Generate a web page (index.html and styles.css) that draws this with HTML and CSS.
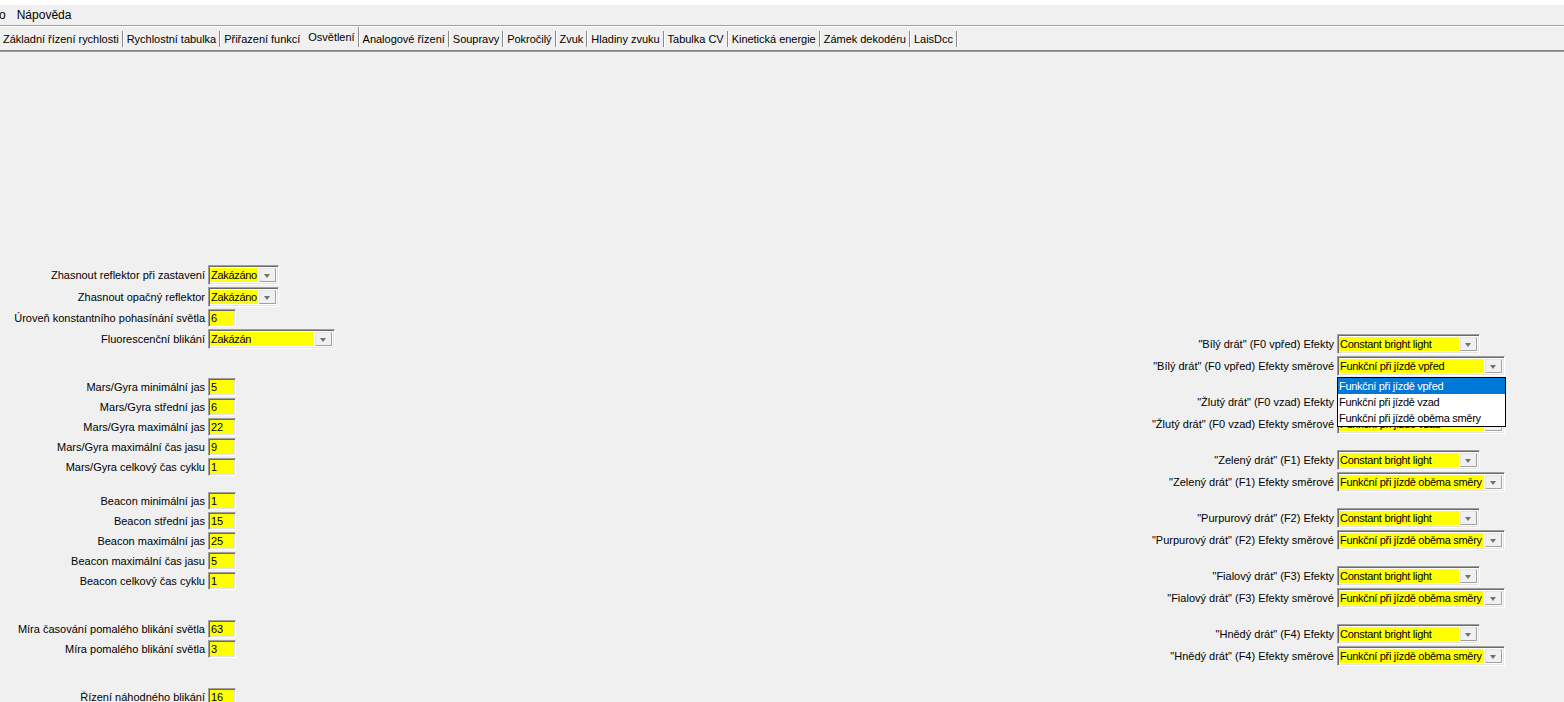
FILE: index.html
```html
<!DOCTYPE html>
<html lang="cs">
<head>
<meta charset="utf-8">
<title>Osvětlení</title>
<link rel="stylesheet" href="styles.css">
</head>
<body>
<div class="topstrip"></div>
<div class="menubar">
  <span class="menu-item cut">o</span>
  <span class="menu-item">Nápověda</span>
</div>
<div class="tabs">
  <span class="tab">Základní řízení rychlosti</span>
  <span class="tab">Rychlostní tabulka</span>
  <span class="tab noline">Přiřazení funkcí</span>
  <span class="tab active">Osvětlení</span>
  <span class="tab">Analogové řízení</span>
  <span class="tab">Soupravy</span>
  <span class="tab">Pokročilý</span>
  <span class="tab">Zvuk</span>
  <span class="tab">Hladiny zvuku</span>
  <span class="tab">Tabulka CV</span>
  <span class="tab">Kinetická energie</span>
  <span class="tab">Zámek dekodéru</span>
  <span class="tab">LaisDcc</span>
</div>
<div class="content">
  <div class="left">
    <div class="row h23"><span class="lbl">Zhasnout reflektor při zastavení</span><span class="combo w69"><span class="val">Zakázáno</span><span class="btn"></span></span></div>
    <div class="row h22"><span class="lbl">Zhasnout opačný reflektor</span><span class="combo w69"><span class="val">Zakázáno</span><span class="btn"></span></span></div>
    <div class="row h20"><span class="lbl">Úroveň konstantního pohasínání světla</span><span class="field">6</span></div>
    <div class="row h21"><span class="lbl">Fluorescenční blikání</span><span class="combo w125"><span class="val">Zakázán</span><span class="btn"></span></span></div>
    <div class="spacer s28"></div>
    <div class="row h20"><span class="lbl">Mars/Gyra minimální jas</span><span class="field">5</span></div>
    <div class="row h20"><span class="lbl">Mars/Gyra střední jas</span><span class="field">6</span></div>
    <div class="row h20"><span class="lbl">Mars/Gyra maximální jas</span><span class="field">22</span></div>
    <div class="row h20"><span class="lbl">Mars/Gyra maximální čas jasu</span><span class="field">9</span></div>
    <div class="row h20"><span class="lbl">Mars/Gyra celkový čas cyklu</span><span class="field">1</span></div>
    <div class="spacer s14"></div>
    <div class="row h20"><span class="lbl">Beacon minimální jas</span><span class="field">1</span></div>
    <div class="row h20"><span class="lbl">Beacon střední jas</span><span class="field">15</span></div>
    <div class="row h20"><span class="lbl">Beacon maximální jas</span><span class="field">25</span></div>
    <div class="row h20"><span class="lbl">Beacon maximální čas jasu</span><span class="field">5</span></div>
    <div class="row h20"><span class="lbl">Beacon celkový čas cyklu</span><span class="field">1</span></div>
    <div class="spacer s28"></div>
    <div class="row h20"><span class="lbl">Míra časování pomalého blikání světla</span><span class="field">63</span></div>
    <div class="row h20"><span class="lbl">Míra pomalého blikání světla</span><span class="field">3</span></div>
    <div class="spacer s28"></div>
    <div class="row h20"><span class="lbl">Řízení náhodného blikání</span><span class="field">16</span></div>
  </div>
  <div class="right">
    <div class="row h22"><span class="lbl">"Bílý drát" (F0 vpřed) Efekty</span><span class="combo w141"><span class="val">Constant bright light</span><span class="btn"></span></span></div>
    <div class="row h22"><span class="lbl">"Bílý drát" (F0 vpřed) Efekty směrové</span><span class="combo w166"><span class="val">Funkční při jízdě vpřed</span><span class="btn"></span>
      <span class="dropdown">
        <span class="opt sel">Funkční při jízdě vpřed</span>
        <span class="opt">Funkční při jízdě vzad</span>
        <span class="opt">Funkční při jízdě oběma směry</span>
      </span></span></div>
    <div class="spacer s14"></div>
    <div class="row h22"><span class="lbl">"Žlutý drát" (F0 vzad) Efekty</span><span class="combo w141"><span class="val">Constant bright light</span><span class="btn"></span></span></div>
    <div class="row h22"><span class="lbl">"Žlutý drát" (F0 vzad) Efekty směrové</span><span class="combo w166"><span class="val">Funkční při jízdě vzad</span><span class="btn"></span></span></div>
    <div class="spacer s14"></div>
    <div class="row h22"><span class="lbl">"Zelený drát" (F1) Efekty</span><span class="combo w141"><span class="val">Constant bright light</span><span class="btn"></span></span></div>
    <div class="row h22"><span class="lbl">"Zelený drát" (F1) Efekty směrové</span><span class="combo w166"><span class="val">Funkční při jízdě oběma směry</span><span class="btn"></span></span></div>
    <div class="spacer s14"></div>
    <div class="row h22"><span class="lbl">"Purpurový drát" (F2) Efekty</span><span class="combo w141"><span class="val">Constant bright light</span><span class="btn"></span></span></div>
    <div class="row h22"><span class="lbl">"Purpurový drát" (F2) Efekty směrové</span><span class="combo w166"><span class="val">Funkční při jízdě oběma směry</span><span class="btn"></span></span></div>
    <div class="spacer s14"></div>
    <div class="row h22"><span class="lbl">"Fialový drát" (F3) Efekty</span><span class="combo w141"><span class="val">Constant bright light</span><span class="btn"></span></span></div>
    <div class="row h22"><span class="lbl">"Fialový drát" (F3) Efekty směrové</span><span class="combo w166"><span class="val">Funkční při jízdě oběma směry</span><span class="btn"></span></span></div>
    <div class="spacer s14"></div>
    <div class="row h22"><span class="lbl">"Hnědý drát" (F4) Efekty</span><span class="combo w141"><span class="val">Constant bright light</span><span class="btn"></span></span></div>
    <div class="row h22"><span class="lbl">"Hnědý drát" (F4) Efekty směrové</span><span class="combo w166"><span class="val">Funkční při jízdě oběma směry</span><span class="btn"></span></span></div>
  </div>
</div>
</body>
</html>
```

FILE: styles.css
```css
html, body {
  margin: 0;
  padding: 0;
  height: 100%;
  overflow: hidden;
}
body {
  background: #f0f0f0;
  font-family: "Liberation Sans", Arial, sans-serif;
  font-size: 11px;
  color: #000;
}
.topstrip {
  height: 5px;
  background: #fff;
}
.menubar {
  height: 21px;
  display: flex;
  align-items: center;
  border-bottom: 1px solid #a0a0a0;
  box-shadow: 0 1px 0 #fff;
  box-sizing: border-box;
  font-size: 12px;
}
.menu-item {
  padding: 0 6px;
}
.menu-item.cut {
  padding: 0 5px 0 0;
  margin-left: -1px;
}
.tabs {
  margin-top: 2px;
  height: 23px;
  display: flex;
  align-items: center;
  border-bottom: 1px solid #808080;
  box-shadow: 0 1px 0 #a0a0a0;
  box-sizing: border-box;
}
.tab {
  padding: 0 3px;
  height: 16px;
  line-height: 16px;
  border-right: 1px solid #8a8a8a;
  box-shadow: 1px 0 0 #fff;
  margin-right: 1px;
  white-space: nowrap;
  letter-spacing: -0.02px;
}
.tab.noline {
  border-right: none;
  box-shadow: none;
  margin-right: 2px;
}
.tab.active {
  margin-top: -4px;
  height: 20px;
  line-height: 20px;
  padding: 0 3px;
}
.content {
  display: flex;
  justify-content: space-between;
}
.left {
  margin-top: 212px;
  display: flex;
  flex-direction: column;
}
.right {
  margin-top: 282px;
  padding-right: 59px;
  display: flex;
  flex-direction: column;
}
.row {
  display: flex;
  align-items: center;
}
.left .row .lbl {
  width: 205px;
}
.right .row .lbl {
  width: 200px;
}
.lbl {
  text-align: right;
  padding-right: 3px;
  white-space: nowrap;
}
.h20 { height: 20px; }
.h21 { height: 21px; }
.h22 { height: 22px; }
.h23 { height: 23px; }
.spacer.s28 { height: 28px; }
.spacer.s14 { height: 14px; }
.field {
  width: 28px;
  height: 18px;
  box-sizing: border-box;
  background: #ffff00;
  border-top: 1px solid #a0a0a0;
  border-left: 1px solid #a0a0a0;
  border-right: 1px solid #fff;
  border-bottom: 1px solid #fff;
  box-shadow: inset 1px 1px 0 #696969, inset -1px -1px 0 #e3e3e3;
  padding: 1px 1px 1px 2px;
  line-height: 15px;
}
.combo {
  position: relative;
  height: 20px;
  box-sizing: border-box;
  display: flex;
  background: #fff;
  border-top: 1px solid #a0a0a0;
  border-left: 1px solid #a0a0a0;
  border-right: 1px solid #fff;
  border-bottom: 1px solid #fff;
  box-shadow: inset 1px 1px 0 #696969, inset -1px -1px 0 #e3e3e3;
  padding: 2px 2px 2px 1px;
}
.w69 { width: 71px; }
.w125 { width: 127px; }
.w141 { width: 143px; }
.w166 { width: 168px; }
.val {
  flex: 1;
  background: #ffff00;
  line-height: 14px;
  padding-left: 1px;
  white-space: nowrap;
  overflow: hidden;
  letter-spacing: -0.3px;
}
.btn {
  width: 17px;
  flex: none;
  margin-left: 1px;
  background: #f0f0f0;
  box-sizing: border-box;
  border-top: 1px solid #e3e3e3;
  border-left: 1px solid #e3e3e3;
  border-right: 1px solid #a0a0a0;
  border-bottom: 1px solid #a0a0a0;
  position: relative;
}
.btn::after {
  content: "";
  position: absolute;
  left: 4px;
  top: 5px;
  border-left: 3.5px solid transparent;
  border-right: 3.5px solid transparent;
  border-top: 4px solid #707070;
}
.dropdown {
  position: absolute;
  left: -1px;
  top: 20px;
  width: 169px;
  box-sizing: border-box;
  border: 1px solid #000;
  background: #fff;
  display: flex;
  flex-direction: column;
  z-index: 5;
}
.opt {
  height: 16px;
  line-height: 16px;
  padding-left: 1px;
  white-space: nowrap;
  letter-spacing: -0.3px;
}
.opt.sel {
  background: #0078d7;
  color: #fff;
}
```
